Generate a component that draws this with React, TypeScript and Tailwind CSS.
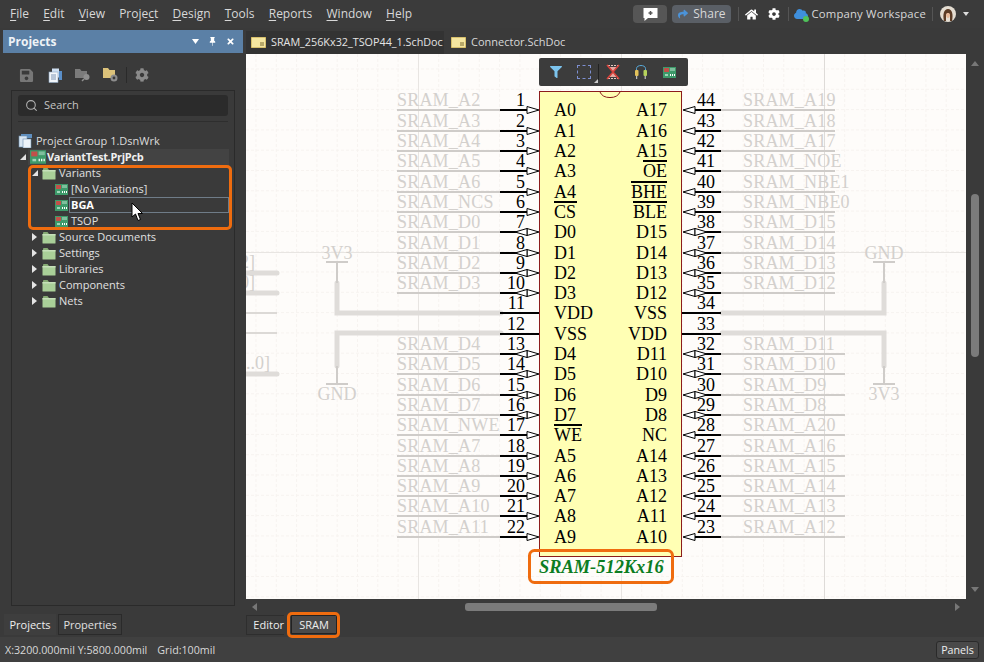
import { ReactNode } from "react";
import { FaCog, FaFilter, FaHome, FaSave, FaShare, FaTimes, FaCloud } from "react-icons/fa";
import { BsPinFill } from "react-icons/bs";
import { Search } from "lucide-react";

const leftNets = ["A2", "A3", "A4", "A5", "A6", "NCS", "D0", "D1", "D2", "D3", "", "", "D4", "D5", "D6", "D7", "NWE", "A7", "A8", "A9", "A10", "A11"];
const rightNets = ["A19", "A18", "A17", "NOE", "NBE1", "NBE0", "D15", "D14", "D13", "D12", "", "", "D11", "D10", "D9", "D8", "A20", "A16", "A15", "A14", "A13", "A12"];
const leftPins = ["A0", "A1", "A2", "A3", "A4", "CS", "D0", "D1", "D2", "D3", "VDD", "VSS", "D4", "D5", "D6", "D7", "WE", "A5", "A6", "A7", "A8", "A9"];
const rightPins = ["A17", "A16", "A15", "OE", "BHE", "BLE", "D15", "D14", "D13", "D12", "VSS", "VDD", "D11", "D10", "D9", "D8", "NC", "A14", "A13", "A12", "A11", "A10"];
const overbarsLeft: Record<string, number> = { CS: 23, WE: 28 };
const overbarsRight: Record<string, number> = { OE: 24, BHE: 36, BLE: 34 };

const pinY = (i: number) => Math.round(110.4 + i * 20.3);
const isBidir = (i: number) => (i >= 6 && i <= 9) || (i >= 12 && i <= 15);
const isPower = (i: number) => i === 10 || i === 11;

const serif = "'Liberation Serif', serif";

function Schematic() {
  const gridX = Array.from({ length: 36 }, (_, i) => 256 + i * 20.3);
  const gridY = Array.from({ length: 27 }, (_, i) => 69 + i * 20.3);
  return (
    <svg viewBox="246 54 720 545" className="block w-full h-full" fontFamily={serif}>
      {gridX.map((x) => (
        <line key={x} x1={x} y1={54} x2={x} y2={599} stroke="#f7f3f0" strokeWidth="1" strokeDasharray="3 2" />
      ))}
      {gridY.map((y) => (
        <line key={y} x1={246} y1={y} x2={966} y2={y} stroke="#f7f3f0" strokeWidth="1" strokeDasharray="3 2" />
      ))}
      <line x1={418.5} y1={54} x2={418.5} y2={599} stroke="#e8e5e2" />
      <line x1={621.5} y1={54} x2={621.5} y2={599} stroke="#e8e5e2" />
      <line x1={824.5} y1={54} x2={824.5} y2={599} stroke="#dedbd8" />
      <line x1={246} y1={252.5} x2={966} y2={252.5} stroke="#e8e5e2" />

      {/* power rails */}
      <g fill="none" stroke="#dfdcd9" strokeWidth="5" strokeLinecap="round">
        <path d="M337 283V313H501" />
        <path d="M337 366V333H501" />
        <path d="M884 283V313H722" />
        <path d="M884 366V333H722" />
        <path d="M246 273H277" />
        <path d="M246 293H277" />
        <path d="M246 374H277" />
      </g>
      <g stroke="#cfccc9" strokeWidth="2">
        <path d="M337 262V283M326 262H348M337 366V384M326 384H348" />
        <path d="M884 262V283M873 262H895M884 366V384M873 384H895" />
      </g>
      <path d="M246 313H277M246 333H277" stroke="#dcd9d6" strokeWidth="2" />
      <g fill="#d3d0cd" fontSize="18" textAnchor="middle">
        <text x={337} y={259}>3V3</text>
        <text x={337} y={400}>GND</text>
        <text x={884} y={259}>GND</text>
        <text x={884} y={400}>3V3</text>
      </g>
      {/* bus names run in from beyond the sheet's left edge */}
      <g fill="#d3d0cd" fontSize="18">
        <text x={240} y={268}>2]</text>
        <text x={240} y={288}>0]</text>
        <text x={246} y={369}>..0]</text>
      </g>

      {/* nets */}
      {leftNets.map((n, i) =>
        n ? (
          <g key={i}>
            <line x1={397} y1={pinY(i)} x2={500} y2={pinY(i)} stroke="#cfccc9" strokeWidth="2" />
            <text x={397} y={pinY(i) - 4.5} fontSize="18" letterSpacing="0.2" fill="#d3d0cd">{`SRAM_${n}`}</text>
          </g>
        ) : null
      )}
      {rightNets.map((n, i) =>
        n ? (
          <g key={i}>
            <line x1={721} y1={pinY(i)} x2={i < 10 ? 835 : 845} y2={pinY(i)} stroke="#cfccc9" strokeWidth="2" />
            <text x={743} y={pinY(i) - 4.5} fontSize="18" letterSpacing="0.2" fill="#d3d0cd">{`SRAM_${n}`}</text>
          </g>
        ) : null
      )}

      {/* chip */}
      <rect x={539.5} y={91.5} width={142} height={465} fill="#ffffb4" stroke="#8c1c1c" strokeWidth="1" />
      <path d="M600 92A10.5 8 0 0 0 620 92" fill="none" stroke="#8c1c1c" strokeWidth="1" />

      {leftPins.map((p, i) => {
        const y = pinY(i);
        return (
          <g key={i}>
            <line x1={500} y1={y} x2={isPower(i) ? 539 : 527} y2={y} stroke="#000" strokeWidth="2" />
            {!isPower(i) && <path d={`M527 ${y - 3.5}L539 ${y}L527 ${y + 3.5}Z`} fill="#fff" stroke="#000" strokeWidth="1" />}
            {isBidir(i) && <path d={`M527 ${y - 3.5}L515 ${y}L527 ${y + 3.5}Z`} fill="#fff" stroke="#000" strokeWidth="1" />}
            <text x={525} y={y - 4} fontSize="18" textAnchor="end" fill="#000">{i + 1}</text>
            <text x={554} y={y + 6} fontSize="18" fill="#000">{p}</text>
            {overbarsLeft[p] && <line x1={554} y1={y - 10} x2={554 + overbarsLeft[p]} y2={y - 10} stroke="#000" strokeWidth="2" />}
          </g>
        );
      })}
      {rightPins.map((p, i) => {
        const y = pinY(i);
        return (
          <g key={i}>
            <line x1={isPower(i) ? 682 : 695} y1={y} x2={721} y2={y} stroke="#000" strokeWidth="2" />
            {!isPower(i) && <path d={`M695 ${y - 3.5}L683 ${y}L695 ${y + 3.5}Z`} fill="#fff" stroke="#000" strokeWidth="1" />}
            {isBidir(i) && <path d={`M695 ${y - 3.5}L707 ${y}L695 ${y + 3.5}Z`} fill="#fff" stroke="#000" strokeWidth="1" />}
            <text x={697} y={y - 4} fontSize="18" fill="#000">{44 - i}</text>
            <text x={667} y={y + 6} fontSize="18" textAnchor="end" fill="#000">{p}</text>
            {overbarsRight[p] && <line x1={667 - overbarsRight[p]} y1={y - 10} x2={667} y2={y - 10} stroke="#000" strokeWidth="2" />}
          </g>
        );
      })}

      <text x={539} y={573} fontSize="18.4" fontWeight="bold" fontStyle="italic" fill="#0c7d22">SRAM-512Kx16</text>
      <rect x={529.5} y={550.5} width={143} height={32} rx={5} fill="none" stroke="#ef6c0f" strokeWidth="3" />
    </svg>
  );
}

function FolderIcon() {
  return (
    <svg width="14" height="13" viewBox="0 0 14 13" className="shrink-0">
      <path d="M1 3V2.2C1 1.5 1.5 1 2.2 1H5.5L7 3Z" fill="#86ab74" />
      <rect x="0.5" y="3" width="13" height="9.5" rx="0.6" fill="#a9cf98" />
      <rect x="0.5" y="3" width="13" height="1.5" fill="#c6e0b9" />
    </svg>
  );
}

function PcbIcon({ size = 13 }: { size?: number }) {
  return (
    <svg width={size} height={size - 2} viewBox="0 0 13 11" className="shrink-0">
      <rect x="0" y="0" width="13" height="11" fill="#3d9a6a" />
      <rect x="1" y="1" width="5" height="4" fill="#c2504a" />
      <rect x="7" y="1" width="5" height="3" fill="#7fbf9d" />
      <rect x="2" y="7" width="3" height="2" fill="#9fd4b8" />
      <path d="M7 7h1v2H7zM9 7h1v2H9zM11 7h1v2h-1z" fill="#fff" />
    </svg>
  );
}

function Caret({ open = false }: { open?: boolean }) {
  return open ? (
    <svg width="6" height="6" viewBox="0 0 6 6" className="shrink-0">
      <path d="M6 0V6H0Z" fill="#e4e4e4" />
    </svg>
  ) : (
    <svg width="5" height="8" viewBox="0 0 5 8" className="shrink-0">
      <path d="M0 0L5 4L0 8Z" fill="#e4e4e4" />
    </svg>
  );
}

function MenuItem({ pre = "", u, post }: { pre?: string; u: string; post: string }) {
  return (
    <span>
      {pre}
      <span className="underline underline-offset-2">{u}</span>
      {post}
    </span>
  );
}

function FolderRow({ label, open = false }: { label: string; open?: boolean }) {
  return (
    <div className="flex h-4 items-center pl-[32px]">
      <span className="flex w-[10px] justify-start">
        <Caret open={open} />
      </span>
      <FolderIcon />
      <span className="ml-[3px]">{label}</span>
    </div>
  );
}

function VariantRow({ label, active = false }: { label: string; active?: boolean }) {
  return (
    <div className="flex h-4 items-center pl-[55px]">
      <PcbIcon />
      <span className={active ? "ml-[1px] flex h-4 w-[160px] items-center border border-[#6f7c88] pl-[1px] font-bold text-white" : "ml-[2px] pl-[1px]"}>
        {label}
      </span>
    </div>
  );
}

function SepV() {
  return <span className="block h-[14px] w-px bg-[#555]" />;
}

function ToolBtn({ children }: { children: ReactNode }) {
  return <span className="flex w-[28px] items-center justify-center">{children}</span>;
}

export default function App() {
  return (
    <div className="relative flex h-[662px] w-[984px] flex-col overflow-hidden bg-[#3a3a3a] font-['Open_Sans',sans-serif] text-[11px] text-[#e0e0e0]">
      {/* menu bar */}
      <header className="flex h-[28px] shrink-0 items-center bg-[#3b3b3b] pl-[10px] pr-[10px] text-[12px] text-[#d8d8d8]">
        <nav className="flex gap-[14.2px]">
          <MenuItem u="F" post="ile" />
          <MenuItem u="E" post="dit" />
          <MenuItem u="V" post="iew" />
          <span>
            Proje<span className="underline underline-offset-2">c</span>t
          </span>
          <MenuItem u="D" post="esign" />
          <MenuItem u="T" post="ools" />
          <MenuItem u="R" post="eports" />
          <MenuItem u="W" post="indow" />
          <MenuItem u="H" post="elp" />
        </nav>
        <div className="ml-auto flex items-center text-[12px]">
          <span className="flex h-[18px] w-[34px] items-center justify-center rounded-sm bg-[#565656]">
            <svg width="17" height="15" viewBox="0 0 17 15">
              <path d="M1.5 1H15.5V11H6L2.5 14V11H1.5Z" fill="#fff" />
              <path d="M6.5 6H10.5M8.5 4V8" stroke="#555" strokeWidth="1.5" />
            </svg>
          </span>
          <span className="ml-[5px] flex h-[18px] w-[59px] items-center justify-center gap-[5px] rounded-sm bg-[#5a5f66]">
            <FaShare className="text-[10px] text-[#4b93d9]" />
            Share
          </span>
          <span className="ml-[7px]"><SepV /></span>
          <FaHome className="ml-[6px] text-[13px] text-white" />
          <FaCog className="ml-[10px] text-[12px] text-white" />
          <span className="ml-[8px]"><SepV /></span>
          <span className="relative ml-[5px] flex">
            <FaCloud className="text-[14px] text-[#3f8fdc]" />
            <span className="absolute -bottom-[1px] -right-[1px] h-[6px] w-[6px] rounded-full bg-[#4fc25a]" />
          </span>
          <span className="ml-[3px] text-[11.3px] tracking-[0.2px] text-[#d8d8d8]">Company Workspace</span>
          <span className="ml-[6px]"><SepV /></span>
          <svg width="16" height="16" viewBox="0 0 16 16" className="ml-[7px]">
            <circle cx="8" cy="8" r="8" fill="#e4ddd2" />
            <path d="M4 15C2.5 8 4 3 8 3S13.5 8 12 15H10V9.5L8 7L6 9.5V15Z" fill="#5b3b25" />
            <path d="M6 8.5C6 6.5 10 6.5 10 8.5C10 11 9 12 8 12S6 11 6 8.5Z" fill="#e7b999" />
          </svg>
          <svg width="6" height="4" viewBox="0 0 6 4" className="ml-[7px] mr-[5px]">
            <path d="M0 0H6L3 4Z" fill="#ddd" />
          </svg>
        </div>
      </header>

      <div className="flex min-h-0 flex-1">
        {/* projects panel */}
        <aside className="flex w-[246px] shrink-0 flex-col pl-[3px] pr-[3px] pt-[2px]">
          <div className="flex h-[23px] shrink-0 items-center bg-[#5b80a6] pl-[5px] pr-[8px] text-[12px] font-bold text-[#eef2f6]">
            Projects
            <svg width="7" height="5" viewBox="0 0 7 5" className="ml-auto">
              <path d="M0 0H7L3.5 5Z" fill="#fff" />
            </svg>
            <BsPinFill className="ml-[9px] text-[9px] text-white" />
            <FaTimes className="ml-[9px] text-[9px] text-white" />
          </div>
          <div className="flex h-[37px] shrink-0 items-center pl-[16px] pt-[7px]">
            <FaSave className="text-[15px] text-[#777]" />
            <svg width="14" height="15" viewBox="0 0 14 15" className="ml-[14px]">
              <rect x="4" y="0.5" width="7" height="9" fill="#cfe0f2" />
              <rect x="1" y="4" width="9" height="10.5" fill="#f2f6fa" stroke="#8aa6c4" strokeWidth="0.6" />
              <path d="M3 7H8M3 9H8M3 11H8" stroke="#5f7fa3" strokeWidth="0.8" />
              <rect x="11" y="3" width="3" height="9" fill="#5a8fc9" />
            </svg>
            <svg width="16" height="14" viewBox="0 0 16 14" className="ml-[13px]">
              <path d="M0 1H5L6.5 3H12V10H0Z" fill="#7b7b7b" />
              <circle cx="11.5" cy="9" r="3" fill="#8f8f8f" />
              <path d="M9 11L7 13" stroke="#8f8f8f" strokeWidth="1.5" />
            </svg>
            <svg width="16" height="16" viewBox="0 0 16 16" className="ml-[12px]">
              <path d="M0 1H5L6.5 3H12V11H0Z" fill="#dcc27a" />
              <circle cx="11" cy="11" r="3.5" fill="#8d8d8d" />
              <circle cx="11" cy="11" r="1.4" fill="#3a3a3a" />
            </svg>
            <span className="ml-[7px] h-[16px] w-px bg-[#2a2a2a]" />
            <FaCog className="ml-[8px] text-[14px] text-[#8a8a8a]" />
          </div>
          <div className="mx-[8px] flex min-h-0 flex-1 flex-col border border-[#2a2a2a] px-[6px] pt-[4px]">
            <div className="flex h-[21px] shrink-0 items-center rounded-[3px] bg-[#2b2b2b] pl-[7px] text-[#c4c4c4]">
              <Search size={13} strokeWidth={2} className="text-[#b0b0b0]" />
              <span className="ml-[6px]">Search</span>
            </div>
            <div className="mt-[5px] h-px shrink-0 bg-[#2e2e2e]" />
          </div>
          <div className="h-[8px] shrink-0" />
          <div className="flex h-[23px] shrink-0 items-start gap-[2px] pl-[1px] text-[11px]">
            <span className="flex h-[21px] w-[52px] items-center justify-center bg-[#3e3e3e] pt-[1px] text-[#eee]">Projects</span>
            <span className="flex h-[21px] w-[64px] items-center justify-center border border-[#2a2a2a] bg-[#3a3a3a] pt-[1px]">Properties</span>
          </div>
        </aside>

        {/* document area */}
        <main className="flex min-w-0 flex-1 flex-col">
          <div className="flex h-[26px] shrink-0 items-end">
            <div className="flex h-[23px] w-[198px] items-center bg-[#333] pl-[5px] text-[#e4e4e4]">
              <svg width="15" height="11" viewBox="0 0 15 11">
                <rect width="15" height="11" fill="#f5e6a0" stroke="#b99a3c" />
                <path d="M9 8H13M9 6H13" stroke="#7a6a30" />
              </svg>
              <span className="ml-[5px] text-[10.8px]">SRAM_256Kx32_TSOP44_1.SchDoc</span>
            </div>
            <div className="ml-[7px] flex h-[23px] items-center text-[#d8d8d8]">
              <svg width="15" height="11" viewBox="0 0 15 11">
                <rect width="15" height="11" fill="#f5e6a0" stroke="#b99a3c" />
                <path d="M9 8H13M9 6H13" stroke="#7a6a30" />
              </svg>
              <span className="ml-[5px]">Connector.SchDoc</span>
            </div>
          </div>
          <div className="flex min-h-0 flex-1">
            <div className="relative min-w-0 flex-1 bg-[#fefcfa]">
              <Schematic />
              {/* floating toolbar */}
              <div className="absolute left-[293px] top-[4px] flex h-[28px] w-[149px] items-center rounded-[2px] bg-[#3c3c3c] px-[3px]">
                <ToolBtn>
                  <FaFilter className="text-[12px] text-[#7cc4ee]" />
                </ToolBtn>
                <ToolBtn>
                  <span className="block h-[14px] w-[14px] border border-dashed border-[#7d8fd0]" />
                </ToolBtn>
                <span className="relative h-[16px] w-px bg-[#222]">
                  <span className="absolute -left-[4px] top-[15px] h-0 w-0 border-b-[4px] border-l-[4px] border-b-[#ccc] border-l-transparent" />
                </span>
                <ToolBtn>
                  <svg width="16" height="16" viewBox="0 0 16 16">
                    <path d="M3 1.5H13M3 14.5H13" stroke="#e8c8c0" strokeWidth="1.2" strokeDasharray="2 1" />
                    <path d="M4 3L8 8L4 13H12L8 8L12 3Z" fill="#e4a8a0" />
                    <path d="M2 1L14 15M14 1L2 15" stroke="#d8413a" strokeWidth="1.6" />
                  </svg>
                </ToolBtn>
                <ToolBtn>
                  <svg width="16" height="16" viewBox="0 0 16 16">
                    <path d="M3.5 6V4.5C3.5 0.5 12.5 0.5 12.5 4.5V6" fill="none" stroke="#58a9d8" strokeWidth="1" />
                    <rect x="2" y="6" width="3.5" height="6" rx="1" fill="#e3c25b" />
                    <rect x="10.5" y="6" width="3.5" height="6" rx="1" fill="#b6d35c" />
                    <path d="M3.7 12V15M12.2 12V15" stroke="#ddd" />
                  </svg>
                </ToolBtn>
                <ToolBtn>
                  <PcbIcon size={13} />
                </ToolBtn>
              </div>
            </div>
            <div className="flex w-[18px] shrink-0 flex-col items-center bg-[#3a3a3a] pb-[7px] pt-[7px]">
              <svg width="8" height="5" viewBox="0 0 8 5">
                <path d="M0 5H8L4 0Z" fill="#777" />
              </svg>
              <div className="mt-[128px] h-[163px] w-[8px] rounded-[4px] bg-[#7b7b7b]" />
              <svg width="8" height="5" viewBox="0 0 8 5" className="mt-auto">
                <path d="M0 0H8L4 5Z" fill="#777" />
              </svg>
            </div>
          </div>
          <div className="flex h-[13px] shrink-0 items-center pl-[6px] pr-[24px] pt-[3px]">
            <svg width="5" height="8" viewBox="0 0 5 8">
              <path d="M5 0V8L0 4Z" fill="#777" />
            </svg>
            <div className="ml-[208px] h-[8px] w-[192px] rounded-[3px] bg-[#7b7b7b]" />
            <svg width="5" height="8" viewBox="0 0 5 8" className="ml-auto">
              <path d="M0 0V8L5 4Z" fill="#777" />
            </svg>
          </div>
          <div className="flex h-[25px] shrink-0 items-start pt-[3px]">
            <span className="flex h-[20px] w-[38px] items-center justify-end border border-[#2e2e2e] border-r-0 pt-[1px] text-[#eee]">Editor</span>
            <span className="ml-[7px] flex h-[19px] w-[46px] items-center justify-center border border-[#222] bg-[#4a4a4a] pt-[1px] text-[#eee]">SRAM</span>
          </div>
        </main>
      </div>

      {/* status bar */}
      <footer className="flex h-[25px] shrink-0 items-center bg-[#404040] pl-[5px] pr-[5px] pt-[1px] text-[10.7px] text-[#d8d8d8]">
        <span>X:3200.000mil Y:5800.000mil</span>
        <span className="ml-[10px]">Grid:100mil</span>
        <span className="ml-auto flex h-[18px] w-[43px] items-center justify-center rounded-[3px] border border-[#2a2a2a] bg-[#4a4a4a] text-[#eee]">Panels</span>
      </footer>

      {/* project tree lies over the panel frame */}
      <div className="absolute left-0 top-[133px] w-[246px]">
        <div className="flex h-4 items-center pl-[17px] text-[#dcdcdc]">
          <svg width="16" height="14" viewBox="0 0 16 14">
            <rect x="4" y="0" width="11" height="4" fill="#5f8fbf" />
            <rect x="2" y="2" width="8" height="11" fill="#d9e6f2" stroke="#6d8fb0" strokeWidth="0.6" />
            <rect x="6" y="5" width="8" height="9" fill="#eef4fa" stroke="#6d8fb0" strokeWidth="0.6" />
          </svg>
          <span className="ml-[3px]">Project Group 1.DsnWrk</span>
        </div>
        <div className="relative flex h-4 items-center pl-[20px] font-bold text-[#f0f0f0]">
          <div className="absolute inset-y-0 left-[28px] right-[17px] bg-[#434343]" />
          <span className="relative flex items-center">
            <Caret open />
            <span className="ml-[4px] flex">
              <PcbIcon size={16} />
            </span>
            <span className="ml-[1px] tracking-[-0.3px]">VariantTest.PrjPcb</span>
          </span>
        </div>
        <FolderRow label="Variants" open />
        <VariantRow label="[No Variations]" />
        <VariantRow label="BGA" active />
        <VariantRow label="TSOP" />
        <FolderRow label="Source Documents" />
        <FolderRow label="Settings" />
        <FolderRow label="Libraries" />
        <FolderRow label="Components" />
        <FolderRow label="Nets" />
      </div>

      {/* callouts and pointer */}
      <div className="absolute left-[28px] top-[165px] h-[65px] w-[204px] rounded-[5px] border-[3px] border-[#ef6c0f]" />
      <div className="absolute left-[287px] top-[612px] h-[26px] w-[53px] rounded-[5px] border-[3px] border-[#ef6c0f]" />
      <svg width="13" height="20" viewBox="0 0 13 20" className="absolute left-[131px] top-[202px]">
        <path d="M1 1V15L4.5 12L7 18.5L9.5 17.5L7 11.5H11.5Z" fill="#fff" stroke="#000" strokeWidth="1" />
      </svg>
    </div>
  );
}
